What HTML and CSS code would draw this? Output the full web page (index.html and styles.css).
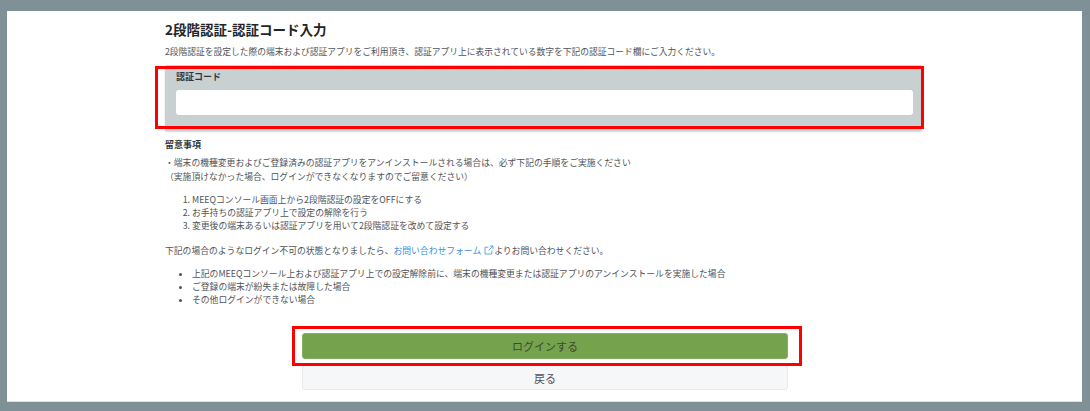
FILE: index.html
```html
<!DOCTYPE html>
<html lang="ja">
<head>
<meta charset="utf-8">
<title>2段階認証</title>
<link rel="stylesheet" href="styles.css">
</head>
<body>
<main class="sheet">
  <div class="content">
    <h1 class="title">2段階認証-認証コード入力</h1>
    <p class="lead">2段階認証を設定した際の端末および認証アプリをご利用頂き、認証アプリ上に表示されている数字を下記の認証コード欄にご入力ください。</p>
    <section class="code-panel">
      <label class="code-label" for="code">認証コード</label>
      <input class="code-input" id="code" type="text">
    </section>
    <h2 class="note-title">留意事項</h2>
    <p class="note-line">・端末の機種変更およびご登録済みの認証アプリをアンインストールされる場合は、必ず下記の手順をご実施ください</p>
    <p class="note-line">（実施頂けなかった場合、ログインができなくなりますのでご留意ください）</p>
    <ol class="steps">
      <li>MEEQコンソール画面上から2段階認証の設定をOFFにする</li>
      <li>お手持ちの認証アプリ上で設定の解除を行う</li>
      <li>変更後の端末あるいは認証アプリを用いて2段階認証を改めて設定する</li>
    </ol>
    <p class="note-line">下記の場合のようなログイン不可の状態となりましたら、<a class="link" href="#">お問い合わせフォーム<svg class="ext" viewBox="0 0 10 10" width="10" height="10" aria-hidden="true"><path d="M7.8 5.6V9H1V2.2h3.4M5.8 1H9v3.2M9 1 4.6 5.4" fill="none" stroke="currentColor" stroke-width="0.8"/></svg></a>よりお問い合わせください。</p>
    <ul class="cases">
      <li>上記のMEEQコンソール上および認証アプリ上での設定解除前に、端末の機種変更または認証アプリのアンインストールを実施した場合</li>
      <li>ご登録の端末が紛失または故障した場合</li>
      <li>その他ログインができない場合</li>
    </ul>
    <div class="actions">
      <button class="btn btn-login" type="button">ログインする</button>
      <button class="btn btn-back" type="button">戻る</button>
    </div>
  </div>
  <div class="mark mark-code"></div>
  <div class="mark mark-login"></div>
</main>
</body>
</html>
```
FILE: styles.css
```css
* { box-sizing: border-box; }
html, body { margin: 0; height: 100%; }
body {
  background: #7f9196;
  padding: 11px 8px 9px 7px;
  font-family: "Noto Sans CJK JP", "Liberation Sans", sans-serif;
  color: #4f5459;
  overflow: hidden;
}
.sheet {
  position: relative;
  height: 391px;
  background: #fff;
  padding: 0 160px 0 158px;
  border-bottom: 1px solid #dfe3e4;
}
.content { display: flex; flex-direction: column; }
.title {
  margin: 9px 0 0;
  font-size: 13.5px;
  line-height: 18px;
  font-weight: 700;
  color: #212529;
}
.lead {
  margin: 7px 0 0;
  font-size: 8.75px;
  line-height: 14px;
}
.code-panel {
  display: flex;
  flex-direction: column;
  margin: 6px 0 0;
  height: 66px;
  padding: 5px 9px 0 11px;
  background: #c9d0d2;
  border-radius: 2px;
  box-shadow: 0 1px 2px rgba(0, 0, 0, .18);
}
.code-label {
  font-size: 9px;
  line-height: 14px;
  font-weight: 700;
  color: #33373b;
}
.code-input {
  margin-top: 6px;
  height: 25px;
  border: 0;
  border-radius: 3px;
  background: #fff;
}
.note-title {
  margin: 7px 0 0;
  font-size: 9px;
  line-height: 13px;
  font-weight: 700;
  color: #33373b;
}
.note-line {
  margin: 0;
  font-size: 8.8px;
  line-height: 14px;
}
.note-title + .note-line { margin-top: 5px; }
.steps, .cases {
  margin: 0;
  padding: 0 0 0 27px;
  font-size: 8.8px;
  line-height: 13.2px;
}
.steps { margin: 9px 0 11px; }
.cases { margin: 9px 0 0; }
.link { color: #3b8fe0; text-decoration: none; }
.ext { vertical-align: -1px; margin-left: 3px; }
.actions {
  display: flex;
  flex-direction: column;
  margin: 27px 134px 0 137px;
}
.btn {
  height: 26px;
  font-family: inherit;
  font-size: 11px;
  border-radius: 3px;
  color: #4f5459;
}
.btn-login {
  background: #75a24c;
  border: 1px solid #86ad61;
  color: #3b4a30;
}
.btn-back {
  margin-top: 6px;
  height: 25px;
  background: #f6f7f9;
  border: 1px solid #e8e9eb;
}
.mark {
  position: absolute;
  border: 3px solid #f00;
  pointer-events: none;
}
.mark-code { left: 148px; top: 55px; width: 769px; height: 63px; }
.mark-login { left: 285px; top: 315px; width: 510px; height: 40px; }
```
